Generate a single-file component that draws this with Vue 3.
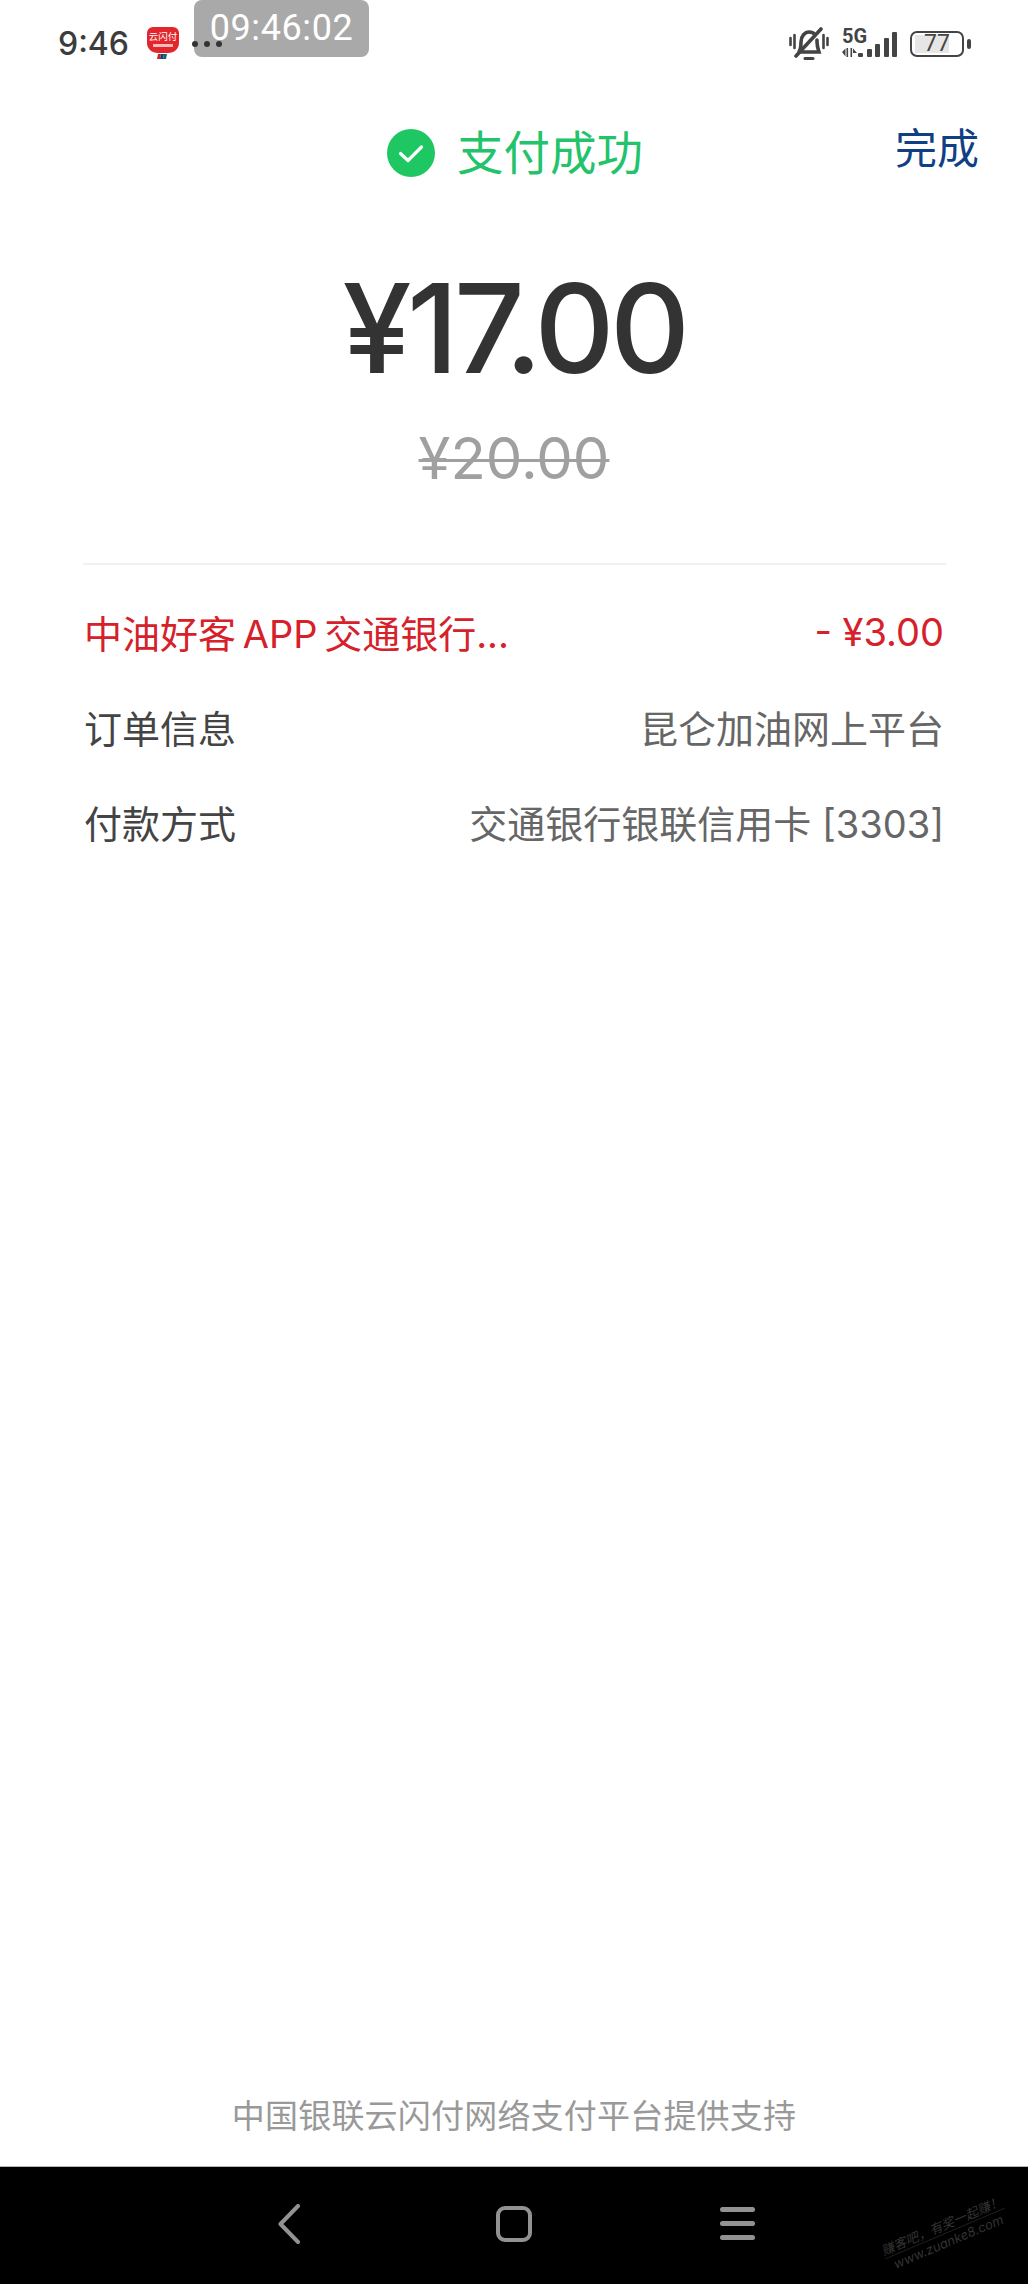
<template>
  <div class="page">
    <div class="status-bar">
      <div class="status-left">
        <span class="clock">9:46</span>
        <svg class="app-icon" width="36" height="34" viewBox="0 0 36 34">
          <path d="M8 1h20a6 6 0 0 1 6 6v10c0 6-5 10-11 10H13C7 27 2 23 2 17V7a6 6 0 0 1 6-6z" fill="#e2262b" />
          <text x="18" y="14" text-anchor="middle" font-size="9.5" fill="#fff">云闪付</text>
          <rect x="8" y="18" width="20" height="3" fill="#f7b9b9" />
          <path d="M13 28h3l-1 5h-3z" fill="#c8242b" />
          <path d="M16 28h3l-1 5h-3z" fill="#1b3f78" />
          <path d="M19 28h3l-1 5h-3z" fill="#14646e" />
        </svg>
        <div class="dots"><i></i><i></i><i></i></div>
      </div>
      <div class="timestamp">09:46:02</div>
      <div class="status-right">
        <svg class="bell" width="40" height="34" viewBox="0 0 40 34" fill="none" stroke="#444" stroke-linecap="round">
          <path d="M1.5 11v7M5.5 8v13M34.5 8v13M38.5 11v7" stroke-width="2.6" />
          <path d="M10 25c2-3 2-6 2-10 0-6 4-10 8-10 3 0 5 1 6 3M28 13v2c0 4 1 7 2 10H12" stroke-width="3.6" />
          <path d="M7 29 32 2" stroke-width="3.6" />
          <path d="M16 31.5h8" stroke-width="3" />
        </svg>
        <div class="signal">
          <div class="net">
            <span class="five-g">5G</span>
            <svg width="15" height="9" viewBox="0 0 15 9" fill="#444">
              <path d="M0 4 3.5 0.5V8.5zM4.5 0h1.6v9H4.5zM8.5 0h1.6v9H8.5zM11 0.5 15 5H11z" />
            </svg>
          </div>
          <div class="bars"><i class="b1"></i><i class="b2"></i><i class="b3"></i><i class="b4"></i><i class="b5"></i></div>
        </div>
        <div class="battery">
          <div class="battery-body"><div class="battery-fill" :style="{ width: battery * 0.88 + '%' }"></div><span>{{ battery }}</span></div>
          <div class="battery-nub"></div>
        </div>
      </div>
    </div>

    <header class="top">
      <div></div>
      <div class="result">
        <svg width="48" height="48" viewBox="0 0 48 48">
          <circle cx="24" cy="24" r="24" fill="#1fc763" />
          <path d="M13.5 24.5 21 31.5 34.5 18" fill="none" stroke="#fff" stroke-width="3.2" stroke-linecap="round" stroke-linejoin="round" />
        </svg>
        <span>支付成功</span>
      </div>
      <div class="done">完成</div>
    </header>

    <div class="amount">¥17.00</div>
    <div class="origin"><span>¥20.00</span></div>

    <div class="details">
      <div v-for="row in rows" :key="row.label" class="row" :class="row.type">
        <span class="label">{{ row.label }}</span>
        <span class="value">{{ row.value }}</span>
      </div>
    </div>

    <div class="footer">中国银联云闪付网络支付平台提供支持</div>

    <nav class="nav">
      <svg class="back" width="24" height="40" viewBox="0 0 24 40" fill="none" stroke="#929292" stroke-width="4" stroke-linecap="round" stroke-linejoin="round">
        <path d="M21 2 3.5 20 21 38" />
      </svg>
      <div class="home"></div>
      <div class="menu"><i></i><i></i><i></i></div>
      <div class="watermark"><span class="wm-top">赚客吧，有奖一起赚！</span><span>www.zuanke8.com</span></div>
    </nav>
  </div>
</template>

<script setup>
const battery = 77

const rows = [
  { label: '中油好客 APP 交通银行...', value: '- ¥3.00', type: 'discount' },
  { label: '订单信息', value: '昆仑加油网上平台', type: '' },
  { label: '付款方式', value: '交通银行银联信用卡 [3303]', type: '' },
]
</script>

<style>
html,
body {
  margin: 0;
  background: #fff;
}
</style>

<style scoped>
.page {
  position: relative;
  width: 1028px;
  height: 2284px;
  display: flex;
  flex-direction: column;
  overflow: hidden;
  background: #fff;
  font-family: Inter, "Noto Sans CJK SC", sans-serif;
}

.status-bar {
  height: 87px;
  padding: 0 57px 0 58px;
  display: flex;
  justify-content: space-between;
  align-items: center;
  box-sizing: border-box;
}

.status-left {
  display: flex;
  align-items: center;
}

.clock {
  font-size: 32px;
  font-weight: 500;
  color: #3c3c3c;
  width: 87px;
}

.app-icon {
  width: 36px;
  height: 34px;
  margin-top: -2px;
}

.dots {
  position: relative;
  z-index: 1;
  display: flex;
  gap: 6px;
  margin-left: 11px;
}

.dots i {
  width: 6px;
  height: 6px;
  border-radius: 50%;
  background: #333;
}

.timestamp {
  position: absolute;
  top: 0;
  left: 194px;
  width: 175px;
  height: 57px;
  border-radius: 8px;
  background: #a9a9a9;
  color: #fff;
  font-family: Roboto, sans-serif;
  font-size: 36px;
  line-height: 56px;
  letter-spacing: 0.6px;
  text-align: center;
}

.status-right {
  display: flex;
  align-items: center;
}

.bell {
  width: 40px;
  height: 34px;
}

.signal {
  display: flex;
  align-items: flex-end;
  margin-left: 13px;
  margin-top: -2px;
  height: 28px;
  width: 56px;
}

.net {
  width: 26px;
  flex: none;
  display: flex;
  flex-direction: column;
  align-items: flex-start;
}

.five-g {
  font-family: Roboto, sans-serif;
  font-size: 20px;
  line-height: 14px;
  font-weight: 700;
  color: #444;
}

.net svg {
  margin-top: 5px;
  width: 15px;
  height: 9px;
}

.bars {
  display: flex;
  align-items: flex-end;
  gap: 3.5px;
  margin-left: -10px;
}

.bars i {
  width: 5px;
  background: #444;
  border-radius: 1px;
}

.b1 { height: 4px; }
.b2 { height: 8px; }
.b3 { height: 13px; }
.b4 { height: 19px; }
.b5 { height: 25px; }

.battery {
  display: flex;
  align-items: center;
  margin-left: 12px;
}

.battery-body {
  position: relative;
  width: 50px;
  height: 22px;
  border: 2.5px solid #444;
  border-radius: 7px;
  display: flex;
  align-items: center;
  justify-content: center;
}

.battery-fill {
  position: absolute;
  left: 3px;
  top: 2px;
  bottom: 2px;
  background: #e6e6e6;
}

.battery-body span {
  position: relative;
  font-family: Roboto, sans-serif;
  font-size: 23px;
  line-height: 22px;
  color: #444;
}

.battery-nub {
  width: 4px;
  height: 10px;
  margin-left: 3px;
  border-radius: 2px;
  background: #444;
}

.top {
  margin-top: 39px;
  padding-right: 49px;
  display: grid;
  grid-template-columns: 1fr auto 1fr;
  align-items: center;
  height: 54px;
}

.result {
  display: flex;
  align-items: center;
  gap: 22px;
  font-size: 46.5px;
  line-height: 54px;
  color: #22c36a;
  margin-left: 51px;
}

.result svg {
  flex: none;
}

.done {
  justify-self: end;
  font-size: 42px;
  line-height: 54px;
  color: #0f3f85;
  margin-top: -8px;
}

.amount {
  margin-top: 75px;
  text-align: center;
  font-size: 124px;
  line-height: 146px;
  font-weight: 500;
  letter-spacing: -4.5px;
  color: #333;
}

.origin {
  margin-top: 22px;
  text-align: center;
  font-size: 58px;
  line-height: 70px;
  color: #a0a0a0;
}

.origin span {
  text-decoration: line-through;
  text-decoration-thickness: 3px;
}

.details {
  margin: 70px 82px 0 83px;
  padding-top: 19px;
  border-top: 2px solid #f1f1f1;
}

.row {
  height: 95px;
  display: flex;
  justify-content: space-between;
  align-items: center;
  padding: 0 2px 0 1px;
  font-size: 38px;
  color: #666;
}

.row .label {
  color: #444;
}

.row.discount .label {
  word-spacing: -4px;
}

.row.discount .label,
.row.discount .value {
  color: #d6212a;
}

.footer {
  margin-top: auto;
  height: 49px;
  line-height: 49px;
  text-align: center;
  font-size: 33px;
  letter-spacing: 0.2px;
  color: #999;
}

.nav {
  position: relative;
  margin-top: 25px;
  height: 118px;
  flex: none;
  background: #000;
  border-top: 1px solid #b5b5b5;
  box-sizing: border-box;
  display: flex;
  align-items: center;
  padding: 0 0 0 277px;
}

.back {
  width: 24px;
  height: 40px;
  margin-top: -4px;
}

.home {
  width: 36px;
  height: 36px;
  margin-left: 195px;
  margin-top: -4px;
  border: 4px solid #929292;
  border-radius: 9px;
  box-sizing: border-box;
}

.menu {
  width: 35px;
  margin-left: 188px;
  margin-top: -4px;
  display: flex;
  flex-direction: column;
  gap: 9px;
}

.menu i {
  height: 5px;
  border-radius: 3px;
  background: #929292;
}

.watermark {
  position: absolute;
  left: 870px;
  top: 50px;
  width: 150px;
  display: flex;
  flex-direction: column;
  align-items: center;
  transform: rotate(-23deg);
  font-size: 13px;
  line-height: 16px;
  font-style: italic;
  color: #333;
  white-space: nowrap;
}

.wm-top {
  border-bottom: 1px solid #222;
}
</style>
